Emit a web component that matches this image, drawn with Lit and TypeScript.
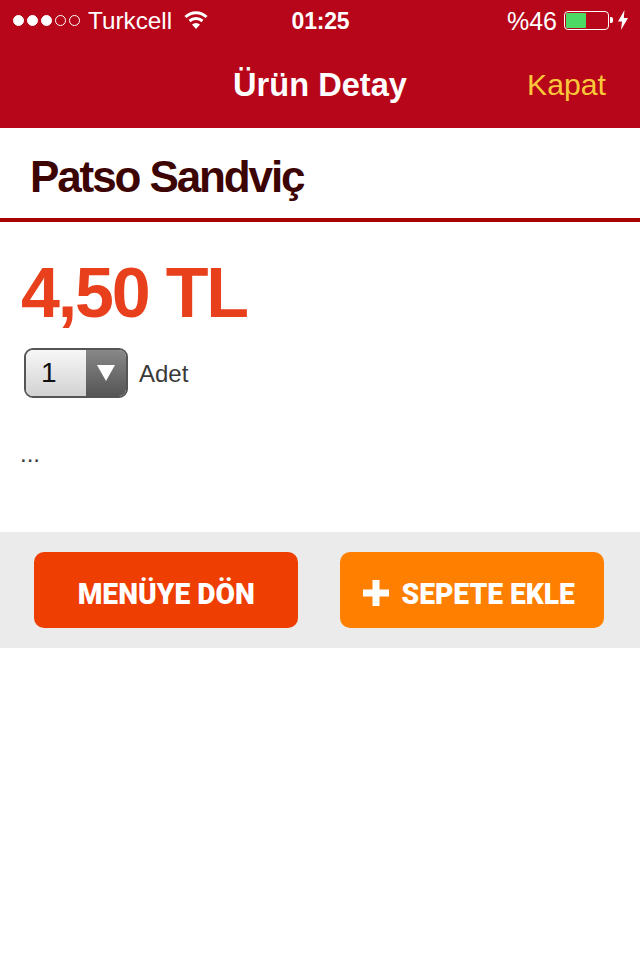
import { LitElement, html, css } from "lit";
import { customElement } from "lit/decorators.js";

@customElement("app-root")
export class AppRoot extends LitElement {
  static styles = css`
    :host { display: block; width: 640px; height: 960px; background: #fff; font-family: "Liberation Sans", Arial, sans-serif; overflow: hidden; }
    .head { background: #b70519; height: 128px; color: #fff; display: flex; flex-direction: column; }
    .status { height: 42px; display: grid; grid-template-columns: 1fr auto 1fr; align-items: center; padding: 0 12px 0 13px; }
    .left, .right { display: flex; align-items: center; }
    .right { justify-content: flex-end; }
    .dots { display: flex; gap: 3px; margin: -2px 8px 0 0; }
    .dot { width: 11px; height: 11px; border-radius: 50%; border: 1px solid #fff; box-sizing: border-box; }
    .dot.on { background: #fff; }
    .carrier { font-size: 24.3px; }
    .wifi { margin-left: 12px; margin-top: -2px; display: block; }
    .time { font-size: 23px; font-weight: 700; letter-spacing: -0.2px; }
    .pct { font-size: 25px; margin-right: 7px; }
    .bat { width: 45px; height: 19px; border: 1px solid #fff; border-radius: 4px; box-sizing: border-box; padding: 1px; margin-top: -2px; }
    .fill { width: 20px; height: 100%; background: #4cd964; border-radius: 1px; }
    .nub { width: 3px; height: 6px; background: #fff; border-radius: 0 2px 2px 0; margin: -2px 5px 0 1px; }
    .bolt { display: block; margin-top: -2px; }
    .nav { flex: 1; position: relative; display: flex; align-items: center; justify-content: center; }
    .title { font-size: 32.6px; font-weight: 700; }
    .close { position: absolute; left: 527px; top: 26px; font-size: 30.2px; color: #fbc73a; line-height: 34px; }
    .name { box-sizing: content-box; border-bottom: 4px solid #a80303; display: flex; align-items: center; padding: 8px 0 0 30px; height: 82px; font-size: 44px; font-weight: 700; letter-spacing: -2.1px; color: #3d0404; }
    .main { height: 310px; box-sizing: border-box; padding: 30px 20px 0 21px; display: flex; flex-direction: column; align-items: flex-start; }
    .price { font-size: 70px; line-height: 82px; font-weight: 700; letter-spacing: -2.2px; color: #e8401c; }
    .qty { display: flex; align-items: center; margin: 13px 0 0 3px; }
    .select { width: 104px; height: 50px; box-sizing: border-box; border: 2px solid #555; border-radius: 9px; display: flex; overflow: hidden; }
    .val { flex: 1; background: linear-gradient(#f7f7f7, #d2d2d2); font-size: 28px; line-height: 46px; color: #111; padding-left: 15px; }
    .arrow { width: 40px; background: linear-gradient(#888, #555); display: flex; align-items: center; justify-content: center; }
    .adet { font-size: 24px; line-height: 50px; padding-top: 2px; color: #3a3a3a; margin-left: 11px; }
    .more { font-size: 24px; color: #3a3a3a; margin: 40px 0 0 -1px; line-height: 30px; }
    .actions { height: 116px; background: #ebebeb; box-sizing: border-box; padding: 20px 36px 20px 34px; display: flex; justify-content: space-between; }
    .btn { width: 264px; height: 76px; box-sizing: border-box; border-radius: 10px; color: #fff; display: flex; align-items: center; justify-content: center; font-family: Roboto, sans-serif; font-weight: 900; font-size: 30px; padding-top: 6px; }
    .btn span { display: inline-block; transform: scaleX(0.94); margin: 0 -5.5px; white-space: nowrap; }
    .back { background: #ee3e02; }
    .add { background: #ff7f00; gap: 12px; padding-right: 6px; }
    .plus { display: block; }
  `;

  render() {
    return html`
      <div class="head">
        <div class="status">
          <div class="left">
            <div class="dots">
              <span class="dot on"></span><span class="dot on"></span><span class="dot on"></span><span class="dot"></span><span class="dot"></span>
            </div>
            <span class="carrier">Turkcell</span>
            <svg class="wifi" width="24" height="20" viewBox="0 0 24 20" fill="none" stroke="#fff" stroke-width="3">
              <path d="M1.5 7 A15 15 0 0 1 22.5 7" />
              <path d="M5.5 11 A10 10 0 0 1 18.5 11" />
              <path d="M12 19 L8 14.5 A6 6 0 0 1 16 14.5 Z" fill="#fff" stroke="none" />
            </svg>
          </div>
          <div class="time">01:25</div>
          <div class="right">
            <span class="pct">%46</span>
            <div class="bat"><div class="fill"></div></div>
            <div class="nub"></div>
            <svg class="bolt" width="10" height="20" viewBox="0 0 10 20"><path d="M6.5 0 L0 11.5 H4 L3 20 L10 8 H5.8 Z" fill="#fff" /></svg>
          </div>
        </div>
        <div class="nav">
          <span class="title">Ürün Detay</span>
          <span class="close">Kapat</span>
        </div>
      </div>
      <div class="name">Patso Sandviç</div>
      <div class="main">
        <div class="price">4,50 TL</div>
        <div class="qty">
          <div class="select">
            <div class="val">1</div>
            <div class="arrow">
              <svg width="20" height="18" viewBox="0 0 20 18"><path d="M1 1 H19 L10 17 Z" fill="#fff" /></svg>
            </div>
          </div>
          <span class="adet">Adet</span>
        </div>
        <div class="more">...</div>
      </div>
      <div class="actions">
        <div class="btn back"><span>MENÜYE DÖN</span></div>
        <div class="btn add">
          <svg class="plus" width="26" height="26" viewBox="0 0 26 26"><path d="M9.5 0 H16.5 V9.5 H26 V16.5 H16.5 V26 H9.5 V16.5 H0 V9.5 H9.5 Z" fill="#fff" /></svg>
          <span>SEPETE EKLE</span>
        </div>
      </div>
    `;
  }
}
